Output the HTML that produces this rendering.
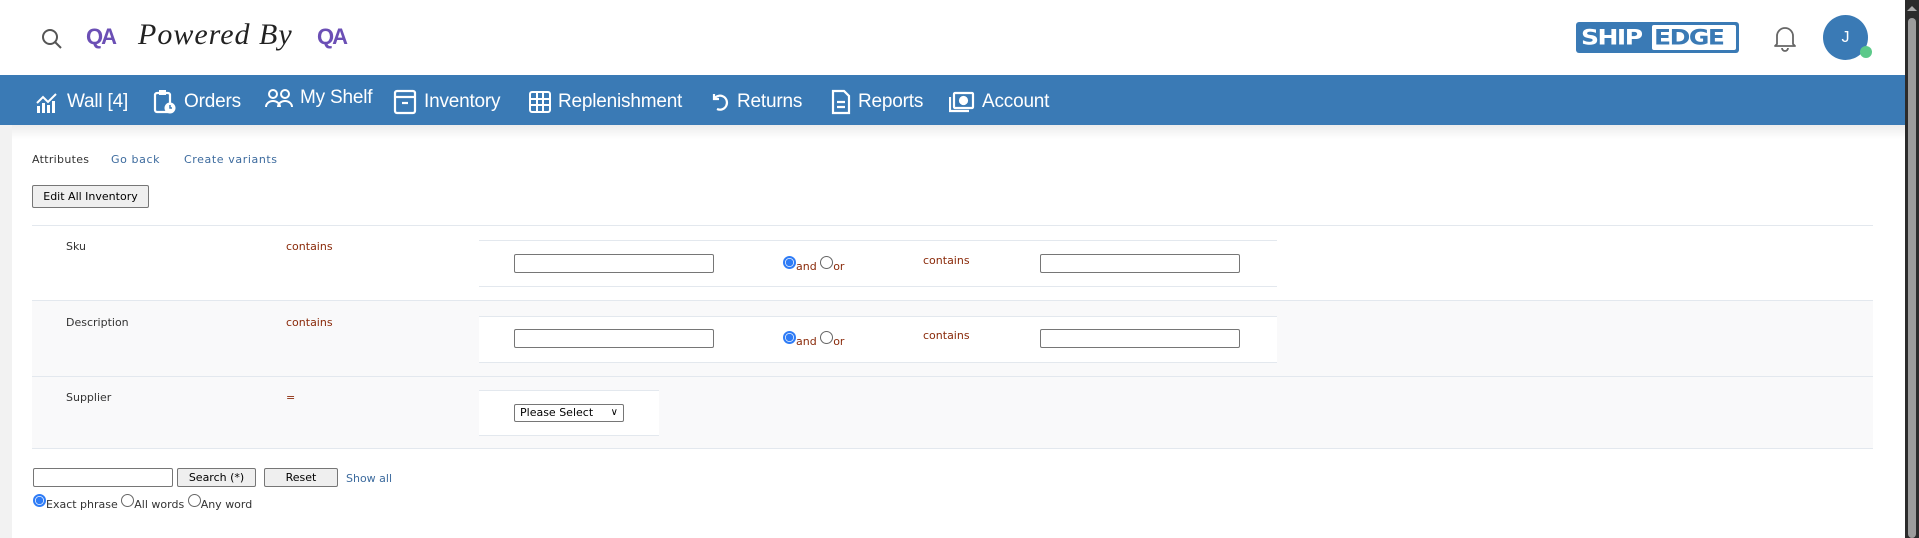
<!DOCTYPE html>
<html><head><meta charset="utf-8"><style>
*{box-sizing:border-box;margin:0;padding:0}
body{width:1919px;height:538px;overflow:hidden;background:#fff;font-family:"DejaVu Sans","Liberation Sans",sans-serif;position:relative}
.a{position:absolute;white-space:nowrap}
.nav{position:absolute;left:0;top:75px;width:1905px;height:50px;background:#3a7ab5;}
.ni{position:absolute;top:2px;height:50px;display:flex;align-items:center;color:#fff;font-family:"Liberation Sans",sans-serif;font-size:19px;letter-spacing:-0.2px}
.ni svg{margin-right:7px}
.sm{font-size:11px;color:#333}
.red{color:#8a2a0a;font-size:11px}
.inp{position:absolute;border:1px solid #767676;border-radius:2px;background:#fff;height:19px}
.btn{position:absolute;border:1px solid #767676;border-radius:2px;background:#efefef;font-size:11px;color:#000;display:flex;align-items:center;justify-content:center}
.rad{display:inline-block;width:13px;height:13px;border:1px solid #666;border-radius:50%;vertical-align:1px;background:#fff}
.rad.on{border:2px solid #2f7cf6;background:radial-gradient(circle,#2f7cf6 0 3.5px,#fff 4px)}
.blk{position:absolute;background:#fff;border-top:1px solid #e3e8ee;border-bottom:1px solid #e3e8ee}
</style></head><body>
<!-- header -->
<svg class="a" style="left:40px;top:27px" width="24" height="24" viewBox="0 0 24 24"><circle cx="10" cy="10" r="7" fill="none" stroke="#555" stroke-width="2"/><line x1="15" y1="15" x2="21" y2="21" stroke="#555" stroke-width="2"/></svg>
<div class="a" style="left:86px;top:24px;font:bold 22px 'Liberation Sans';color:#6b4fb5;letter-spacing:-2px">QA</div>
<div class="a" style="left:138px;top:18px;font:italic 30px 'Liberation Serif',serif;color:#222;letter-spacing:1px">Powered By</div>
<div class="a" style="left:317px;top:24px;font:bold 22px 'Liberation Sans';color:#6b4fb5;letter-spacing:-2px">QA</div>
<div class="a" style="left:1576px;top:22px;width:163px;height:31px;background:#3a7ab5;border-radius:3px"></div>
<div class="a" style="left:1581px;top:22px;font:900 25px/31px 'DejaVu Sans';color:#fff;letter-spacing:-1.5px;transform:scaleY(.85)">SHIP</div>
<div class="a" style="left:1652px;top:25px;width:84px;height:25px;background:#fff;border-radius:2px"></div>
<div class="a" style="left:1654px;top:22px;font:900 25px/31px 'DejaVu Sans';color:#3a7ab5;letter-spacing:-1.5px;transform:scaleY(.85)">EDGE</div>
<svg class="a" style="left:1772px;top:24px" width="26" height="28" viewBox="0 0 26 28"><path d="M5 20V12a8 8 0 0 1 16 0v8l2 2H3z" fill="none" stroke="#666" stroke-width="1.8" stroke-linejoin="round"/><path d="M10 24a3 3 0 0 0 6 0" fill="none" stroke="#666" stroke-width="1.8"/></svg>
<div class="a" style="left:1823px;top:15px;width:45px;height:45px;border-radius:50%;background:#3a7ab5;color:#fff;font:16px/45px 'Liberation Sans';text-align:center">J</div>
<div class="a" style="left:1860px;top:46px;width:12px;height:12px;border-radius:50%;background:#5cc98a"></div>
<!-- scrollbar -->
<div class="a" style="left:1905px;top:0;width:14px;height:538px;background:#2b2b2b"></div>
<div class="a" style="left:1908px;top:18px;width:8px;height:520px;background:#9c9c9c;border-radius:4px"></div>
<div class="a" style="left:1907px;top:6px;width:0;height:0;border-left:5px solid transparent;border-right:5px solid transparent;border-bottom:5px solid #aaa"></div>
<!-- nav -->
<div class="nav">
<div class="ni" style="left:36px"><svg width="24" height="22" viewBox="0 0 24 22" fill="#fff"><rect x="1" y="15" width="3" height="7"/><rect x="6" y="12" width="3" height="10"/><rect x="11" y="14" width="3" height="8"/><rect x="16" y="10" width="3" height="12"/><path d="M1 12l6-6 5 5 8-8" fill="none" stroke="#fff" stroke-width="2"/></svg>Wall [4]</div>
<div class="ni" style="left:153px"><svg width="24" height="26" viewBox="0 0 24 26"><rect x="2" y="4" width="15" height="19" rx="2" fill="none" stroke="#fff" stroke-width="2.2"/><rect x="6" y="1" width="7" height="5" fill="#fff"/><circle cx="17" cy="19" r="5.5" fill="#fff"/><path d="M17 16v3h2" stroke="#3a7ab5" stroke-width="1.5" fill="none"/></svg>Orders</div>
<div class="ni" style="left:265px;top:-2px"><svg width="28" height="20" viewBox="0 0 28 20" fill="none" stroke="#fff" stroke-width="2"><circle cx="8" cy="6" r="4"/><circle cx="20" cy="6" r="4"/><path d="M1 19a7 6 0 0 1 14 0M13 19a7 6 0 0 1 14 0"/></svg>My Shelf</div>
<div class="ni" style="left:393px"><svg width="24" height="26" viewBox="0 0 24 26" fill="none" stroke="#fff" stroke-width="2.2"><rect x="2" y="2" width="20" height="22" rx="2"/><line x1="2" y1="8" x2="22" y2="8"/><line x1="9" y1="14" x2="15" y2="14"/></svg>Inventory</div>
<div class="ni" style="left:529px"><svg width="22" height="22" viewBox="0 0 22 22" fill="none" stroke="#fff" stroke-width="2"><rect x="1" y="1" width="20" height="20" rx="2"/><path d="M8 1v20M14 1v20M1 8h20M1 14h20"/></svg>Replenishment</div>
<div class="ni" style="left:710px"><svg width="20" height="20" viewBox="0 0 20 20" fill="none" stroke="#fff" stroke-width="2.2"><path d="M4 2v5h5"/><path d="M4 7a7 7 0 1 1 3 10"/></svg>Returns</div>
<div class="ni" style="left:831px"><svg width="20" height="26" viewBox="0 0 20 26" fill="none" stroke="#fff" stroke-width="2.2"><path d="M2 2h11l5 5v17H2z"/><path d="M6 13h8M6 18h8"/></svg>Reports</div>
<div class="ni" style="left:949px"><svg width="26" height="22" viewBox="0 0 26 22" fill="none" stroke="#fff" stroke-width="2.2"><rect x="5" y="2" width="19" height="15" rx="1"/><path d="M1 6v14h19"/><circle cx="14.5" cy="9.5" r="3.5" fill="#fff"/></svg>Account</div>
</div>
<!-- content -->
<div class="a" style="left:0;top:125px;width:12px;height:413px;background:#f2f2f2"></div>
<div class="a" style="left:12px;top:125px;width:1893px;height:14px;background:linear-gradient(#ececec,#fff)"></div>
<div class="a sm" style="left:32px;top:153px;letter-spacing:.3px">Attributes</div>
<div class="a sm" style="left:111px;top:153px;color:#3d6b9e;letter-spacing:.6px">Go back</div>
<div class="a sm" style="left:184px;top:153px;color:#3d6b9e;letter-spacing:.6px">Create variants</div>
<div class="btn" style="left:32px;top:185px;width:117px;height:23px">Edit All Inventory</div>
<!-- table -->
<div class="a" style="left:32px;top:225px;width:1841px;height:1px;background:#e3e8ee"></div>
<div class="a" style="left:32px;top:300px;width:1841px;height:76px;background:#f9f9fa;border-top:1px solid #e3e8ee"></div>
<div class="a" style="left:32px;top:376px;width:1841px;height:73px;background:#f9f9fa;border-top:1px solid #e3e8ee;border-bottom:1px solid #e3e8ee"></div>
<div class="a sm" style="left:66px;top:240px">Sku</div>
<div class="a red" style="left:286px;top:240px">contains</div>
<div class="blk" style="left:479px;top:240px;width:798px;height:47px"></div>
<div class="inp" style="left:514px;top:254px;width:200px"></div>
<div class="a red" style="left:783px;top:256px"><span class="rad on"></span>and <span class="rad"></span>or</div>
<div class="a red" style="left:923px;top:254px">contains</div>
<div class="inp" style="left:1040px;top:254px;width:200px"></div>

<div class="a sm" style="left:66px;top:316px">Description</div>
<div class="a red" style="left:286px;top:316px">contains</div>
<div class="blk" style="left:479px;top:316px;width:798px;height:47px"></div>
<div class="inp" style="left:514px;top:329px;width:200px"></div>
<div class="a red" style="left:783px;top:331px"><span class="rad on"></span>and <span class="rad"></span>or</div>
<div class="a red" style="left:923px;top:329px">contains</div>
<div class="inp" style="left:1040px;top:329px;width:200px"></div>

<div class="a sm" style="left:66px;top:391px">Supplier</div>
<div class="a red" style="left:286px;top:391px">=</div>
<div class="blk" style="left:479px;top:390px;width:180px;height:46px"></div>
<div class="inp" style="left:514px;top:404px;width:110px;height:18px;font-size:11px;padding-left:5px;line-height:16px">Please Select <span style="position:absolute;right:5px;font-size:10px">&#8744;</span></div>
<!-- bottom -->
<div class="inp" style="left:33px;top:468px;width:140px"></div>
<div class="btn" style="left:177px;top:468px;width:79px;height:19px">Search (*)</div>
<div class="btn" style="left:264px;top:468px;width:74px;height:19px">Reset</div>
<div class="a sm" style="left:346px;top:472px;color:#3d6b9e">Show all</div>
<div class="a sm" style="left:33px;top:494px"><span class="rad on"></span>Exact phrase <span class="rad"></span>All words <span class="rad"></span>Any word</div>
</body></html>
